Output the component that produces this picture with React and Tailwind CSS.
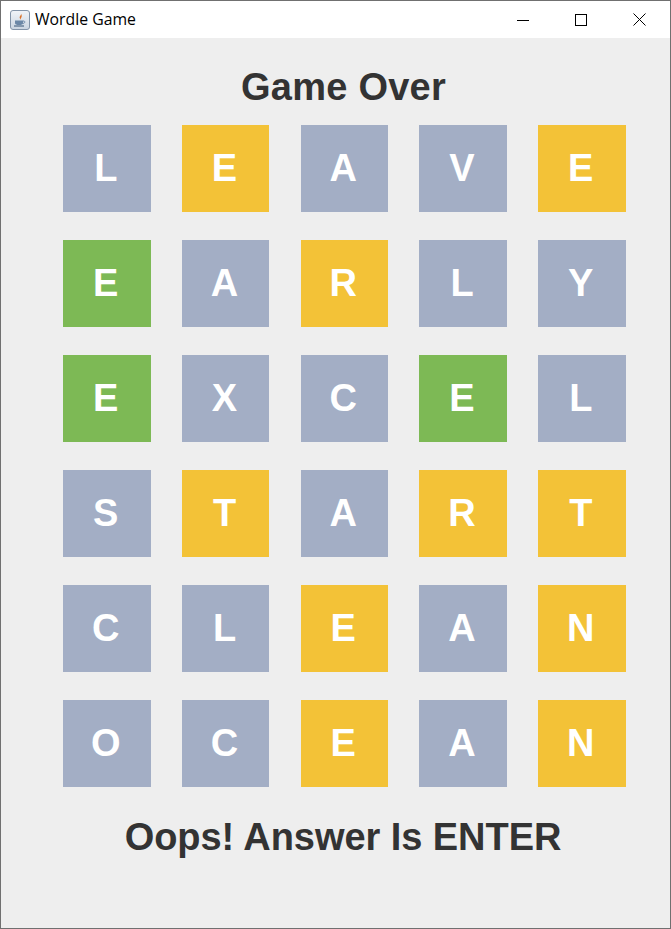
const ROWS = [
  [["L", "g"], ["E", "y"], ["A", "g"], ["V", "g"], ["E", "y"]],
  [["E", "e"], ["A", "g"], ["R", "y"], ["L", "g"], ["Y", "g"]],
  [["E", "e"], ["X", "g"], ["C", "g"], ["E", "e"], ["L", "g"]],
  [["S", "g"], ["T", "y"], ["A", "g"], ["R", "y"], ["T", "y"]],
  [["C", "g"], ["L", "g"], ["E", "y"], ["A", "g"], ["N", "y"]],
  [["O", "g"], ["C", "g"], ["E", "y"], ["A", "g"], ["N", "y"]],
];

const TILE = {
  g: "bg-[#a3aec5]",
  y: "bg-[#f3c237]",
  e: "bg-[#7db955]",
};

function JavaIcon() {
  return (
    <svg width="20" height="20" viewBox="0 0 20 20">
      <defs>
        <linearGradient id="javaBg" x1="0" y1="0" x2="0" y2="1">
          <stop offset="0" stopColor="#f1f4f8" />
          <stop offset="1" stopColor="#c9d4e0" />
        </linearGradient>
      </defs>
      <rect x="0.5" y="0.5" width="19" height="19" rx="2.5" fill="url(#javaBg)" stroke="#8394a8" />
      <path d="M10.5 3 C12.5 5 8.5 6 10 8.5 C10.5 9.5 11 9.5 11 9.5 C10 8 13.5 7 10.5 3Z" fill="#d9722b" />
      <path d="M5 10.5 H13 V13 C13 14.5 11.5 15 9 15 C6.5 15 5 14.5 5 13Z" fill="#6b87a6" />
      <path d="M13 11 C15.5 10.5 15.5 13.5 12.5 13.5" fill="none" stroke="#6b87a6" />
      <path d="M4 16 H14" stroke="#4f6a88" strokeWidth="1.2" />
    </svg>
  );
}

export default function App() {
  return (
    <div className="flex h-[929px] w-[671px] flex-col overflow-hidden border border-[#707070] bg-[#eeeeee] [font-family:'Liberation_Sans',Arial,sans-serif]">
      <div className="flex h-[37px] shrink-0 items-center bg-white">
        <div className="ml-[9px]">
          <JavaIcon />
        </div>
        <span className="ml-[5px] text-[15.8px] text-[#000000] [font-family:'Open_Sans','Noto_Sans',sans-serif]">
          Wordle Game
        </span>
        <div className="mr-[2px] ml-auto flex items-center">
          <div className="flex h-[37px] w-[58px] items-center justify-center">
            <svg width="12" height="12" viewBox="0 0 12 12">
              <path d="M0 6.5 H12" stroke="#000" strokeWidth="1" />
            </svg>
          </div>
          <div className="flex h-[37px] w-[58px] items-center justify-center">
            <svg width="12" height="12" viewBox="0 0 12 12">
              <rect x="0.5" y="0.5" width="11" height="11" fill="none" stroke="#000" />
            </svg>
          </div>
          <div className="flex h-[37px] w-[58px] items-center justify-center">
            <svg width="13" height="13" viewBox="0 0 13 13">
              <path d="M0.5 0.5 L12.5 12.5 M12.5 0.5 L0.5 12.5" stroke="#000" strokeWidth="1" />
            </svg>
          </div>
        </div>
      </div>
      <div className="flex flex-1 flex-col">
        <h1 className="mt-[27px] h-[44px] pl-[16px] text-center text-[38px] leading-[44px] font-bold tracking-[0.25px] text-[#333333]">
          Game Over
        </h1>
        <div className="mt-[16px] ml-[62px] grid w-[562.5px] grid-cols-5 gap-x-[31.25px] gap-y-[28px]">
          {ROWS.flat().map(([letter, kind], i) => (
            <div
              key={i}
              className={`flex h-[87px] items-center justify-center pr-[2px] text-[38px] font-bold text-white ${TILE[kind]}`}
            >
              {letter}
            </div>
          ))}
        </div>
        <p className="mt-[28px] h-[44px] pl-[15px] text-center text-[38px] leading-[44px] font-bold tracking-[-0.05px] text-[#333333]">
          Oops! Answer Is ENTER
        </p>
      </div>
    </div>
  );
}
